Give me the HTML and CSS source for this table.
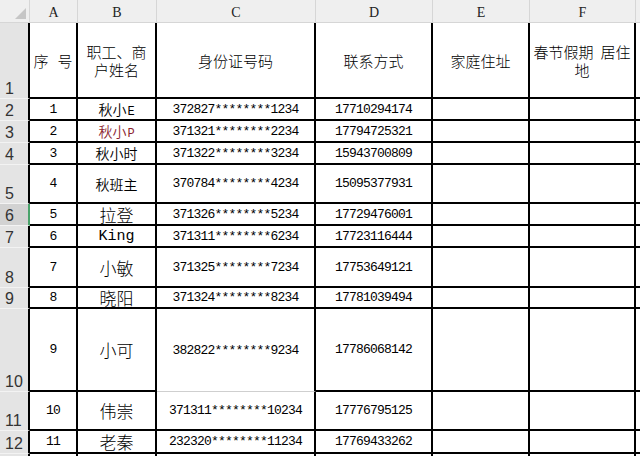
FILE: index.html
```html
<!DOCTYPE html>
<html lang="zh-CN">
<head>
<meta charset="utf-8">
<title>Sheet</title>
<link rel="stylesheet" href="styles.css">
</head>
<body>
<div class="sheet">
  <div class="corner"><svg width="11" height="11" viewBox="0 0 11 11"><polygon points="0,11 11,0 11,11" fill="#c6c6c6"/></svg></div>
  <div class="ch">A</div><div class="ch">B</div><div class="ch">C</div><div class="ch">D</div><div class="ch">E</div><div class="ch">F</div><div class="ch">G</div>

  <div class="rh">1</div>
  <div class="c hd"><span class="t">序<span class="gap"></span>号</span></div>
  <div class="c hd"><span class="t">职工、商<br>户姓名</span></div>
  <div class="c hd"><span class="t">身份证号码</span></div>
  <div class="c hd"><span class="t">联系方式</span></div>
  <div class="c hd"><span class="t">家庭住址</span></div>
  <div class="c hd"><span class="t">春节假期<span class="gap2"></span>居住<br>地</span></div>
  <div class="c"></div>

  <div class="rh">2</div>
  <div class="c">1</div><div class="c n14"><span class="t">秋小<span class="lat">E</span></span></div><div class="c">372827********1234</div><div class="c">17710294174</div><div class="c"></div><div class="c"></div><div class="c"></div>

  <div class="rh">3</div>
  <div class="c">2</div><div class="c n14 red"><span class="t">秋小<span class="lat">P</span></span></div><div class="c">371321********2234</div><div class="c">17794725321</div><div class="c"></div><div class="c"></div><div class="c"></div>

  <div class="rh">4</div>
  <div class="c">3</div><div class="c n14">秋小时</div><div class="c">371322********3234</div><div class="c">15943700809</div><div class="c"></div><div class="c"></div><div class="c"></div>

  <div class="rh">5</div>
  <div class="c">4</div><div class="c n14">秋班主</div><div class="c">370784********4234</div><div class="c">15095377931</div><div class="c"></div><div class="c"></div><div class="c"></div>

  <div class="rh sel">6</div>
  <div class="c">5</div><div class="c n17">拉登</div><div class="c">371326********5234</div><div class="c">17729476001</div><div class="c"></div><div class="c"></div><div class="c"></div>

  <div class="rh">7</div>
  <div class="c">6</div><div class="c king">King</div><div class="c">371311********6234</div><div class="c">17723116444</div><div class="c"></div><div class="c"></div><div class="c"></div>

  <div class="rh">8</div>
  <div class="c">7</div><div class="c n17">小敏</div><div class="c">371325********7234</div><div class="c">17753649121</div><div class="c"></div><div class="c"></div><div class="c"></div>

  <div class="rh">9</div>
  <div class="c">8</div><div class="c n17">晓阳</div><div class="c">371324********8234</div><div class="c">17781039494</div><div class="c"></div><div class="c"></div><div class="c"></div>

  <div class="rh">10</div>
  <div class="c">9</div><div class="c n17">小可</div><div class="c lt">382822********9234</div><div class="c">17786068142</div><div class="c"></div><div class="c"></div><div class="c"></div>

  <div class="rh">11</div>
  <div class="c">10</div><div class="c n17">伟崇</div><div class="c">371311********10234</div><div class="c">17776795125</div><div class="c"></div><div class="c"></div><div class="c"></div>

  <div class="rh">12</div>
  <div class="c">11</div><div class="c n17">老秦</div><div class="c">232320********11234</div><div class="c">17769433262</div><div class="c"></div><div class="c"></div><div class="c"></div>

  <div class="rh">13</div>
  <div class="c"></div><div class="c"></div><div class="c"></div><div class="c"></div><div class="c"></div><div class="c"></div><div class="c"></div>
</div>
</body>
</html>
```

FILE: styles.css
```css
* {
  box-sizing: border-box;
  margin: 0;
  padding: 0;
}

html, body {
  width: 640px;
  height: 456px;
  overflow: hidden;
  background: #ffffff;
}

.sheet {
  display: grid;
  grid-template-columns: 30px 48px 79px 159px 117px 97px 106px 100px;
  grid-template-rows: 23px 76px 22px 22px 22px 39px 22px 22px 40px 21px 83px 39px 23px 40px;
  font-family: "Liberation Mono", "Noto Sans CJK SC", monospace;
  color: #000;
}

.corner {
  background: #efefef;
  border-right: 1px solid #d6d6d6;
  border-bottom: 1px solid #d6d6d6;
  display: flex;
  justify-content: flex-end;
  align-items: flex-end;
  padding: 0 3px 3px 0;
}

.ch {
  background: #efefef;
  border-right: 1px solid #d6d6d6;
  border-bottom: 1px solid #d6d6d6;
  display: flex;
  justify-content: center;
  align-items: flex-end;
  font-family: "Liberation Serif", serif;
  font-size: 14px;
  line-height: 16px;
  color: #222;
  padding-bottom: 1px;
}

.rh {
  background: #e4e4e4;
  border-bottom: 1px solid #f3f3f3;
  border-right: 2px solid #000;
  display: flex;
  align-items: flex-end;
  padding: 0 0 1px 5px;
  font-family: "Liberation Sans", sans-serif;
  font-size: 16px;
  line-height: 16px;
  color: #333;
}

.rh.sel {
  background: #d2d2d2;
  border-right-color: #4aa36b;
}

.c {
  border-right: 2px solid #000;
  border-bottom: 2px solid #000;
  display: flex;
  align-items: center;
  justify-content: center;
  font-size: 13px;
  letter-spacing: -0.8px;
  white-space: nowrap;
  overflow: hidden;
  font-weight: 300;
}

.c.lt {
  border-bottom: 1px solid #cfcfcf;
}

.t {
  display: block;
  text-align: center;
}

.hd {
  font-family: "Noto Sans CJK SC", sans-serif;
  font-size: 15px;
  line-height: 18px;
  letter-spacing: 0;
  padding-top: 1px;
}

.gap {
  display: inline-block;
  width: 9px;
}

.gap2 {
  display: inline-block;
  width: 7px;
}

.n14 {
  font-size: 14px;
  letter-spacing: 0;
  font-weight: 350;
}

.n17 {
  font-size: 17px;
  letter-spacing: 0;
}

.lat {
  font-family: "Liberation Mono", monospace;
  font-size: 12px;
  margin-left: 1px;
}

.king {
  font-size: 15px;
  letter-spacing: 0;
}

.red {
  color: #8c1f30;
}
```
